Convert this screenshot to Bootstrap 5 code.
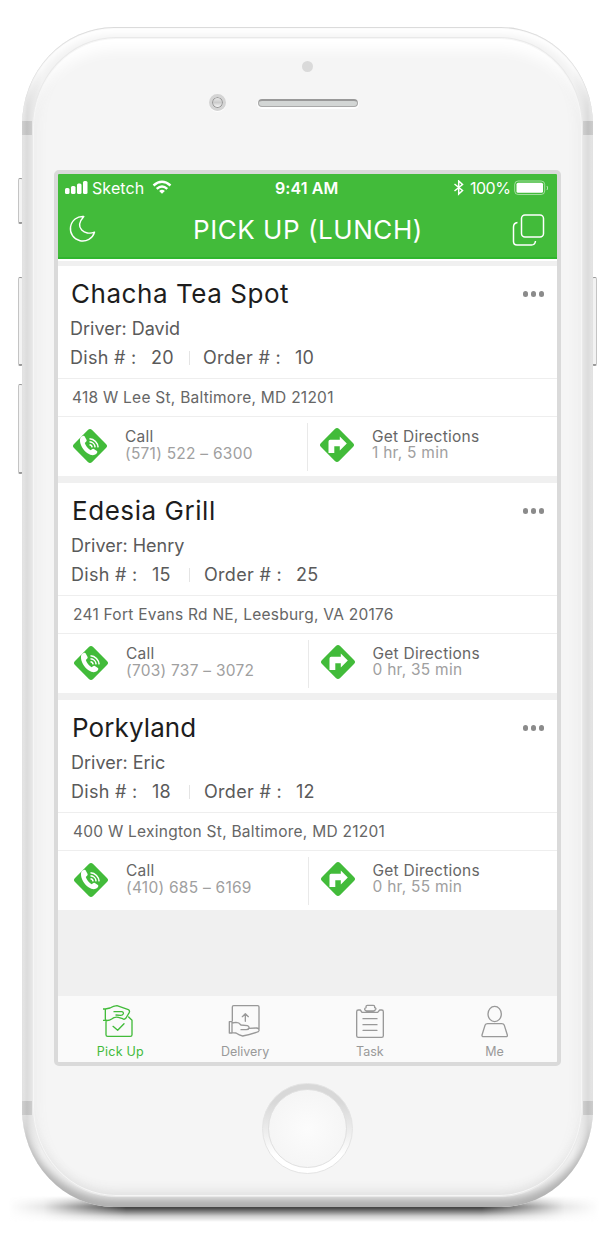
<!DOCTYPE html>
<html lang="en">
<head>
<meta charset="utf-8">
<meta name="viewport" content="width=device-width, initial-scale=1">
<title>Pick Up (Lunch)</title>
<link href="https://cdn.jsdelivr.net/npm/bootstrap@5.3.0/dist/css/bootstrap.min.css" rel="stylesheet">
<style>
body{font-family:Inter,"Liberation Sans",sans-serif;background:#fff;overflow:hidden;color:#555}
.stage{width:608px;height:1241px;padding:27px 0 0 22px}
.floor-shadow{left:8px;top:1196px;width:592px;height:26px;background:linear-gradient(transparent 0,#444 10px,#484848 12px,#888 16px,#ccc 20px,transparent 26px);-webkit-mask-image:linear-gradient(90deg,transparent,rgba(0,0,0,.12) 6%,#000 20%,#000 80%,rgba(0,0,0,.12) 94%,transparent);mask-image:linear-gradient(90deg,transparent,rgba(0,0,0,.12) 6%,#000 20%,#000 80%,rgba(0,0,0,.12) 94%,transparent)}
.phone{width:571px;height:1180px;border-radius:92px/98px;background:linear-gradient(90deg,#e9e9e9 0,#dcdcdc 5px,#e6e6e6 10px,#f2f2f2 20px,#f2f2f2 551px,#e6e6e6 561px,#dcdcdc 566px,#e9e9e9 100%);box-shadow:inset 0 1px 1px #d8d8d8,inset 0 13px 8px -5px #fff,inset 0 -14px 8px -5px #b0b0b0}
.face{inset:10px 10px 10px 10px;border-radius:84px/90px;border:1px solid #e9e9e9;background:#f5f5f5;box-shadow:inset 0 0 0 1px #f6f6f6,inset 0 24px 13px -12px #fff,inset 0 -14px 12px -10px #dedede,inset 12px 0 12px -8px #ededed,inset -12px 0 12px -8px #ededed}
.band{width:10px;height:14px;background:linear-gradient(90deg,#cfcfcf,#c1c1c1,#cdcdcd)}
.side-key{width:5px;border-radius:2px;border:1px solid #c4c4c4;border-top-color:#999;border-bottom:2px solid #999;background:#f3f3f3}
.sensor{left:280px;top:34px;width:11px;height:11px;background:#dadada}
.lens{left:187px;top:67px;width:17px;height:17px;border:3px solid #d4d4d4;background:linear-gradient(#eee,#ccc 50%,#fff);box-shadow:inset 0 0 0 1px #999,0 1px 1px #fff}
.speaker{left:236px;top:72px;width:100px;height:8px;background:#d3d6d5;border:1px solid #a9a9a9;border-top:2px solid #999;box-shadow:0 1px 0 1px #fff}
.bezel{left:32px;top:143px;width:507px;height:896px;border:4px solid #dadada;border-radius:5px;background:#f0f0f0;overflow:hidden}
.home-key{left:240px;top:1056px;width:91px;height:91px;background:linear-gradient(#d8d8d8 20%,#eee 55%,#fff 80%);border:1px solid #e4e4e4;padding:5px}
.home-key>div{background:radial-gradient(#fcfcfc,#f5f5f5 75%);border:1px solid #e0e0e0}
.topbar{height:85px;background:#42bb3a;border-bottom:2px solid #2fb52d;color:#fff}
.status{height:28px;font-size:16px;line-height:28px}
.s-left{left:34px;letter-spacing:.1px}
.s-mid{left:217px;font-weight:600;letter-spacing:.1px}
.s-right{left:412px;letter-spacing:-.5px}
.heading{font-size:26px;line-height:40px;left:135px;top:36px;letter-spacing:.55px}
.hair{height:7px;background:linear-gradient(#fff 2px,#f0f0f0 2px)}
.stop{height:210px;margin-bottom:7px;background:#fff;padding-left:1px}
.stop:first-of-type{padding-left:0}
.stop:first-of-type .addr{margin-left:0;padding-left:14px}
.stop h2{font-size:26px;line-height:32px;color:#1d1d1d;margin:0;letter-spacing:.55px;font-weight:400}
.stop h2.w3{letter-spacing:.1px}
.s-head{height:112px;padding:12px 13px 0 13px}
.dots{gap:2.5px}
.dots i{width:5.5px;height:5.500px;background:#8b8b8b}
.meta{font-size:18px;line-height:29px;color:#5a5a5a;white-space:pre}
.meta.drv{margin:4px 0 0 -1px}
.meta.cnt{margin-left:-1px;letter-spacing:.3px}
.lab{width:81px}
.dish .lab{width:81px}
.ord .lab{width:92px}
.num{width:37px}
.pipe{width:1px;height:14px;background:#e4e4e4;margin-right:14px}
.stop:first-of-type .pipe{margin-left:1px;margin-right:13px}
.addr{height:39px;margin-left:-1px;border-top:1px solid #eee;border-bottom:1px solid #eee;padding-left:15px;font-size:15.5px;line-height:37px;color:#666;letter-spacing:.25px}
.acts{height:59px}
.act{width:249px;padding-left:14px}
.act+.vr-line+.act{padding-left:11px}
.vr-line{width:1px;height:48px;background:#e9e9e9;margin-top:6px}
.act b,.act small{display:block;font-weight:400;line-height:16px;font-size:15.5px;letter-spacing:.25px}
.act small{color:#a0a0a0;line-height:17px}
.act b{color:#666}
.act div{margin-left:17px;margin-top:12px}
.act+.vr-line+.act small{line-height:16px}
.act svg{margin-top:11px}
.act+.vr-line+.act svg{margin-top:10px}
.tabs{height:66px;background:#fafafa;font-size:12.5px;color:#999;line-height:16px}
.tabs svg{fill:none;stroke:currentColor;stroke-width:4;stroke-linejoin:round;stroke-linecap:round;margin:8px 0 6px}
.tabs .on{color:#42bb3a}
.tabs .on span{letter-spacing:.25px}
</style>
</head>
<body>
<svg width="0" height="0" class="position-absolute">
<symbol id="call" viewBox="0 0 36 36"><rect x="5.2" y="5.2" width="25.600" height="25.600" rx="3" transform="rotate(45 18 18)" fill="#42bb3a"/>
<path fill="#fff" d="M9.500 8.600l1.800-.9q.9-.2 1.300.6l2 3.800q.3.900-.3 1.500l-1.500 1.400c.8 2.900 3 5.600 5.800 7.200l1.800-1.300q.7-.5 1.500 0l3 2.200q.8.700.3 1.500l-1 1.400c-2 1.700-5.300 1.600-8.700-.7C11 22 7.600 16.300 8 11.200q.2-1.700 1.500-2.600z"/>
<path fill="none" stroke="#fff" stroke-width="1.500" d="M17.500 16.800a3 3 0 0 1 2.600 2.600M17.500 13.800a6 6 0 0 1 5.600 5.600M17.500 10.800a9 9 0 0 1 8.600 8.600"/></symbol>
<symbol id="turn" viewBox="0 0 36 36"><rect x="5.2" y="5.2" width="25.600" height="25.600" rx="3" transform="rotate(45 18 18)" fill="#42bb3a"/>
<path fill="#fff" d="M9.500 26V14.500q0-1.700 1.700-1.700h9.600V9.500l7 7-7 7v-4.200h-5.500V26z"/></symbol>
</svg>
<main class="stage position-relative">
<div class="floor-shadow position-absolute"></div>
<div class="side-key position-absolute" style="left:18px;top:178px;height:46px"></div>
<div class="side-key position-absolute" style="left:18px;top:277px;height:89px"></div>
<div class="side-key position-absolute" style="left:18px;top:384px;height:90px"></div>
<div class="side-key position-absolute" style="left:592px;top:277px;height:89px"></div>
<div class="phone position-relative">
<div class="face position-absolute"></div>
<div class="band position-absolute" style="left:0;top:94px"></div><div class="band position-absolute" style="right:0;top:94px"></div>
<div class="band position-absolute" style="left:0;top:1074px"></div><div class="band position-absolute" style="right:0;top:1074px"></div>
<div class="sensor position-absolute rounded-circle"></div>
<div class="lens position-absolute rounded-circle"></div>
<div class="speaker position-absolute rounded-pill"></div>
<div class="bezel position-absolute d-flex flex-column">
<header class="topbar position-relative flex-shrink-0">
<div class="status">
<svg class="position-absolute" style="left:7px;top:6px" width="110" height="16" fill="#fff"><rect y="8" width="4.5" height="6" rx="1.5"/><rect x="6" y="6" width="4.5" height="8" rx="1.5"/><rect x="12" y="3.5" width="4.5" height="10.5" rx="1.5"/><rect x="18" y="1" width="4.5" height="13" rx="1.5"/>
<g fill="none" stroke="#fff" stroke-width="2.4"><path d="M88.5 5.5q8.500-7.500 17 0M91.700 8.900q5.300-4.700 10.600 0"/></g><path d="M97 13.800l-2.900-2.900q2.900-2.400 5.800 0z"/></svg>
<span class="s-left position-absolute">Sketch</span><span class="s-mid position-absolute">9:41 AM</span><span class="s-right position-absolute">100%</span>
<svg class="position-absolute" style="left:395px;top:6px" width="102" height="16" fill="none" stroke="#fff"><path stroke-width="1.500" d="M1.500 4l8 6.500L5.700 14V1l3.800 3.500-8 6.500"/><rect x="61.700" y="1" width="30" height="13.500" rx="3.500" stroke-opacity=".5"/><rect x="63.500" y="2.800" width="26.500" height="10" rx="1.500" fill="#fff" stroke="none"/><path d="M94 6q1.300 2 0 4" stroke-opacity=".6"/></svg>
</div>
<svg class="position-absolute" style="left:11px;top:41px" width="28" height="28" fill="none" stroke="#fff" stroke-width="1.400" stroke-linejoin="round"><path d="M14.800 1.500A12.300 12.300 0 1 0 25.500 17.200C16 21 4.500 13 14.800 1.500z"/></svg>
<h1 class="heading position-absolute m-0 fw-normal text-nowrap">PICK UP (LUNCH)</h1>
<svg class="position-absolute" style="left:454px;top:40px" width="34" height="34" fill="none" stroke="#fff" stroke-width="1.500"><rect x="9.500" y="1" width="22" height="22" rx="3.500"/><path d="M5.500 8.500Q1.500 9 1.500 13v14.500q0 3.500 3.500 3.500h14.500q3.500 0 4-4"/></svg>
</header>
<div class="hair flex-shrink-0"></div>

<section class="stop flex-shrink-0">
<div class="s-head"><div class="d-flex justify-content-between align-items-center"><h2 class="w1">Chacha Tea Spot</h2><div class="dots d-flex"><i class="rounded-circle"></i><i class="rounded-circle"></i><i class="rounded-circle"></i></div></div>
<div class="meta drv">Driver: David</div><div class="meta cnt d-flex align-items-center"><span class="dish d-flex"><span class="lab">Dish # :</span><span class="num">20</span></span><span class="pipe"></span><span class="ord d-flex"><span class="lab">Order # :</span><span>10</span></span></div></div>
<div class="addr">418 W Lee St, Baltimore, MD 21201</div>
<div class="acts d-flex"><div class="act d-flex"><svg width="36" height="36"><use href="#call"/></svg><div><b>Call</b><small>(571) 522 – 6300</small></div></div><span class="vr-line"></span><div class="act d-flex"><svg width="36" height="36"><use href="#turn"/></svg><div><b>Get Directions</b><small>1 hr, 5 min</small></div></div></div>
</section>
<section class="stop flex-shrink-0">
<div class="s-head"><div class="d-flex justify-content-between align-items-center"><h2 class="w2">Edesia Grill</h2><div class="dots d-flex"><i class="rounded-circle"></i><i class="rounded-circle"></i><i class="rounded-circle"></i></div></div>
<div class="meta drv">Driver: Henry</div><div class="meta cnt d-flex align-items-center"><span class="dish d-flex"><span class="lab">Dish # :</span><span class="num">15</span></span><span class="pipe"></span><span class="ord d-flex"><span class="lab">Order # :</span><span>25</span></span></div></div>
<div class="addr">241 Fort Evans Rd NE, Leesburg, VA 20176</div>
<div class="acts d-flex"><div class="act d-flex"><svg width="36" height="36"><use href="#call"/></svg><div><b>Call</b><small>(703) 737 – 3072</small></div></div><span class="vr-line"></span><div class="act d-flex"><svg width="36" height="36"><use href="#turn"/></svg><div><b>Get Directions</b><small>0 hr, 35 min</small></div></div></div>
</section>
<section class="stop flex-shrink-0">
<div class="s-head"><div class="d-flex justify-content-between align-items-center"><h2 class="w3">Porkyland</h2><div class="dots d-flex"><i class="rounded-circle"></i><i class="rounded-circle"></i><i class="rounded-circle"></i></div></div>
<div class="meta drv">Driver: Eric</div><div class="meta cnt d-flex align-items-center"><span class="dish d-flex"><span class="lab">Dish # :</span><span class="num">18</span></span><span class="pipe"></span><span class="ord d-flex"><span class="lab">Order # :</span><span>12</span></span></div></div>
<div class="addr">400 W Lexington St, Baltimore, MD 21201</div>
<div class="acts d-flex"><div class="act d-flex"><svg width="36" height="36"><use href="#call"/></svg><div><b>Call</b><small>(410) 685 – 6169</small></div></div><span class="vr-line"></span><div class="act d-flex"><svg width="36" height="36"><use href="#turn"/></svg><div><b>Get Directions</b><small>0 hr, 55 min</small></div></div></div>
</section>

<nav class="tabs row g-0 mt-auto text-center flex-shrink-0">
<div class="col on d-flex flex-column align-items-center"><svg width="34" height="34" viewBox="161 72 102 102"><path d="M170 120v44q0 5 5 5h68q5 0 5-5v-43l-10-10M191 139l14 12 19-20M159 87h9v34h-9zM168 87l14-3q10-6 21-7l34 12q5 3 3 8l-10 17q-5 6-10 2l-13-4q-11-3-20 5-8 6-19 4M194 95h24q5 1 4 6-2 5-8 5l-14-1"/></svg><span>Pick Up</span></div>
<div class="col d-flex flex-column align-items-center"><svg width="34" height="34" viewBox="535 72 102 102"><path d="M548 122V81q0-4 4-4h72q4 0 4 4v66M587 124v-22m-9 8 9-9 9 9M539 125h8v34h-8zM547 129l12-2q9 0 15 8l19 2q6 2 5 7-1 5-8 5h-16M598 145l22-1q9 1 8 8-1 4-8 5-21 7-41 11-10-2-20-9l-12-1"/></svg><span>Delivery</span></div>
<div class="col d-flex flex-column align-items-center"><svg width="34" height="34" viewBox="128 70 102 102"><path d="M155 95l-5-7h-6q-5 0-5 5v72q0 5 5 5h70q5 0 5-5V93q0-5-5-5h-6l-6 7zM167 79v-1q0-4 4-4h18q4 0 4 4v3q5 1 3 5-3 5-7 5h-20q-5-1-6-5 0-4 4-5zM158 114h42M158 132h42M158 149h42"/></svg><span>Task</span></div>
<div class="col d-flex flex-column align-items-center"><svg width="34" height="34" viewBox="504 72 102 102"><ellipse cx="554" cy="102" rx="20" ry="23"/><path d="M533 131h42q6 0 8 5l9 29q1 5-4 5h-67q-6 0-5-5l9-29q2-5 8-5z"/></svg><span>Me</span></div>
</nav>
</div>
<div class="home-key position-absolute rounded-circle"><div class="w-100 h-100 rounded-circle"></div></div>
</div>
</main>
<script src="https://cdn.jsdelivr.net/npm/bootstrap@5.3.0/dist/js/bootstrap.bundle.min.js"></script>
</body>
</html>
